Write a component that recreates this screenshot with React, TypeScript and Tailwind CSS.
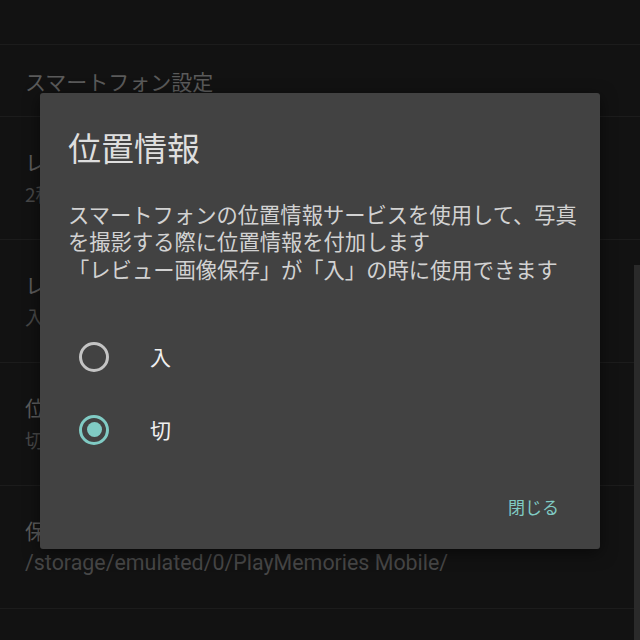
import React from "react";

const font = { fontFamily: '"Noto Sans CJK JP", Roboto, sans-serif' };

function SettingRow({
  title,
  value,
  valueClass = "text-[19px]",
}: {
  title: string;
  value: string;
  valueClass?: string;
}) {
  return (
    <div className="h-[123px] border-b border-[#1c1c1c] px-[25px] pt-[27px]">
      <p className="text-[21px] leading-[34px] text-[#5c5c5c]">{title}</p>
      <p className={`${valueClass} leading-[32px] text-[#474747]`}>{value}</p>
    </div>
  );
}

function Radio({ checked, label }: { checked?: boolean; label: string }) {
  return (
    <div className="flex items-center h-[73px] pl-[39px]">
      <span
        className={
          checked
            ? "w-[30px] h-[30px] rounded-full border-[3px] border-[#80cbc4] flex items-center justify-center"
            : "w-[30px] h-[30px] rounded-full border-[3px] border-[#c4c4c4] flex items-center justify-center"
        }
      >
        {checked && <span className="w-[15px] h-[15px] rounded-full bg-[#80cbc4]" />}
      </span>
      <span className="ml-[41px] text-[21px] text-[#f0f0f0]">{label}</span>
    </div>
  );
}

export default function App() {
  return (
    <div className="relative w-[640px] h-[640px] overflow-hidden bg-[#121212]" style={font}>
      <div className="flex flex-col">
        <div className="h-[45px] border-b border-[#1c1c1c]" />
        <div className="h-[72px] border-b border-[#1c1c1c] px-[25px] pt-[19px]">
          <p className="text-[21px] leading-[34px] text-[#5a5a5a]">スマートフォン設定</p>
        </div>
        <SettingRow title="レビュー表示時間" value="2秒" />
        <SettingRow title="レビュー画像保存" value="入" />
        <SettingRow title="位置情報" value="切" />
        <SettingRow
          title="保存先"
          value="/storage/emulated/0/PlayMemories Mobile/"
          valueClass="text-[21.4px] font-['Roboto',sans-serif]"
        />
      </div>

      <div className="absolute right-0 top-[265px] w-[6px] h-[375px] bg-[#2a2a2a]" />

      <div className="absolute left-[40px] top-[93px] w-[560px] h-[456px] rounded-[3px] bg-[#424242] shadow-[0_4px_16px_rgba(0,0,0,0.5)] flex flex-col">
        <h2 className="pl-[28px] pt-[30px] text-[33px] leading-[48px] text-[#dedede]">位置情報</h2>
        <div className="pl-[28px] pr-[10px] mt-[29px] text-[21.3px] leading-[27px] text-[#d2d2d2]">
          <p>スマートフォンの位置情報サービスを使用して、写真</p>
          <p>を撮影する際に位置情報を付加します</p>
          <p className="mt-[1px]">「レビュー画像保存」が「入」の時に使用できます</p>
        </div>
        <div className="mt-[38px] flex flex-col">
          <Radio label="入" />
          <Radio checked label="切" />
        </div>
        <div className="flex justify-end pr-[41px] mt-[28px]">
          <button className="text-[17px] leading-[26px] text-[#80cbc4]">閉じる</button>
        </div>
      </div>
    </div>
  );
}
